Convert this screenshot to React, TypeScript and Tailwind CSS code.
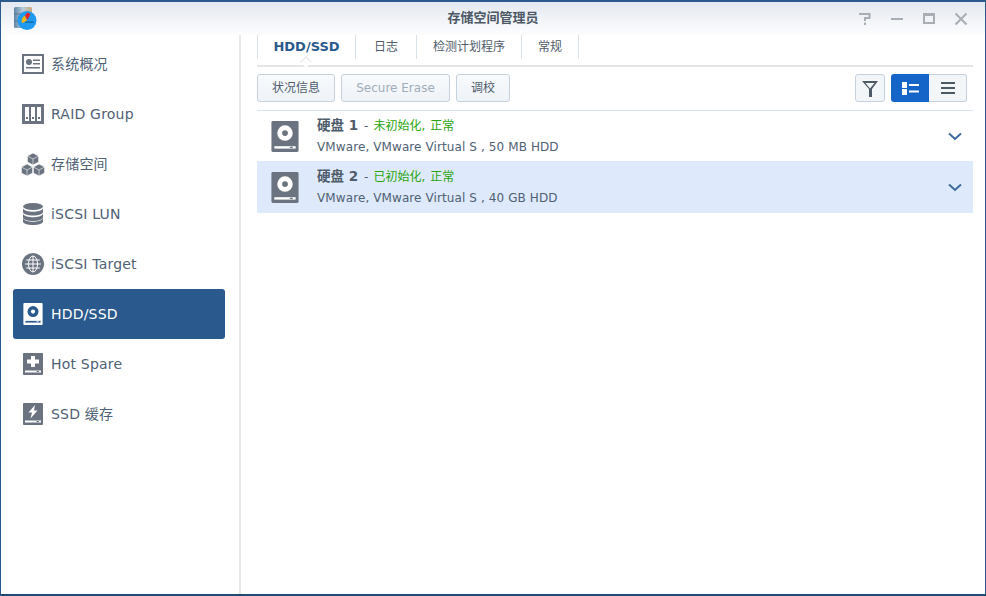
import type { ReactNode } from 'react';

const FONT = "font-['DejaVu_Sans','Noto_Sans_CJK_SC',sans-serif]";

function DiskIcon({ size = 20, fill = '#6a737f', hole = 'white' }: { size?: number; fill?: string; hole?: string }) {
  return (
    <svg width={size} height={Math.round(size * 1.1)} viewBox="0 0 28 32">
      <rect x="0" y="0" width="28" height="32" rx="1.5" fill={fill} />
      <circle cx="14" cy="12.5" r="8" fill={hole} />
      <circle cx="14" cy="12.5" r="3" fill={fill} />
      <rect x="3" y="26" width="22" height="2.5" fill={hole} />
      <rect x="19" y="26.6" width="3" height="1.3" fill={fill} />
    </svg>
  );
}

const iconColor = '#6a737f';

const icons: Record<string, ReactNode> = {
  overview: (
    <svg width="22" height="20" viewBox="0 0 22 20">
      <rect x="0" y="0" width="22" height="20" fill={iconColor} />
      <rect x="2" y="2" width="18" height="16" fill="white" />
      <circle cx="7" cy="8" r="3" fill={iconColor} />
      <rect x="11" y="5.5" width="7" height="1.5" fill={iconColor} />
      <rect x="11" y="9" width="7" height="1.5" fill={iconColor} />
      <rect x="4" y="13" width="14" height="1.5" fill={iconColor} />
    </svg>
  ),
  raid: (
    <svg width="22" height="20" viewBox="0 0 22 20">
      <rect x="0" y="0" width="22" height="20" fill={iconColor} />
      <rect x="3" y="3" width="4" height="14" fill="white" />
      <rect x="9" y="3" width="4" height="14" fill="white" />
      <rect x="15" y="3" width="4" height="14" fill="white" />
      <rect x="4" y="13" width="2" height="2" fill={iconColor} />
      <rect x="10" y="13" width="2" height="2" fill={iconColor} />
      <rect x="16" y="13" width="2" height="2" fill={iconColor} />
    </svg>
  ),
  storage: (
    <svg width="24" height="23" viewBox="0 0 24 23" fill={iconColor} stroke="white" strokeWidth="0.6">
      <path d="M12 0l5.6 3v6L12 12 6.400 9V3z" />
      <path d="M6 11l5.600 3v6L6 23 .4 20v-6z" />
      <path d="M18 11l5.600 3v6L18 23l-5.600-3v-6z" />
      <path d="M6.400 3L12 6l5.600-3M12 6v6M.4 14L6 17l5.600-3M6 17v6M12.400 14l5.600 3 5.600-3M18 17v6" fill="none" />
    </svg>
  ),
  lun: (
    <svg width="20" height="22" viewBox="0 0 20 22" fill={iconColor}>
      <ellipse cx="10" cy="3.500" rx="10" ry="3.500" />
      <path d="M0 5.500c1.500 2.300 5.500 3.200 10 3.200s8.500-.9 10-3.200v3.500c0 2-4.500 3.500-10 3.500S0 11 0 9z" />
      <path d="M0 11c1.500 2.300 5.500 3.200 10 3.200s8.500-.9 10-3.200v3.500c0 2-4.500 3.500-10 3.500S0 16.500 0 14.500z" />
      <path d="M0 15.500c1.500 2.300 5.500 3.200 10 3.200s8.500-.9 10-3.200v3c0 2-4.500 3.500-10 3.500S0 20.500 0 18.500z" />
    </svg>
  ),
  target: (
    <svg width="22" height="22" viewBox="0 0 22 22">
      <circle cx="11" cy="11" r="11" fill={iconColor} />
      <g fill="none" stroke="white" strokeWidth="1">
        <ellipse cx="11" cy="11" rx="4.500" ry="8" />
        <path d="M11 3v16M3 11h16M4.200 7h13.600M4.200 15h13.600" />
      </g>
    </svg>
  ),
  disk: <DiskIcon />,
  diskActive: <DiskIcon fill="white" hole="#2a5a8d" />,
  spare: (
    <svg width="20" height="22" viewBox="0 0 20 22">
      <rect width="20" height="22" rx="1" fill={iconColor} />
      <path d="M8 3h4v3.500h4v4h-4V14H8v-3.500H4v-4h4z" fill="white" />
      <rect x="2" y="17.500" width="16" height="2" fill="white" />
      <rect x="13.500" y="18" width="2.500" height="1" fill={iconColor} />
    </svg>
  ),
  cache: (
    <svg width="20" height="22" viewBox="0 0 20 22">
      <rect width="20" height="22" rx="1" fill={iconColor} />
      <path d="M12 2L5.500 9.500h3.500L7.500 15.500 14.500 7.500H11z" fill="white" />
      <rect x="2" y="17.500" width="16" height="2" fill="white" />
      <rect x="13.500" y="18" width="2.500" height="1" fill={iconColor} />
    </svg>
  ),
};

const navItems = [
  { key: 'overview', label: '系统概况' },
  { key: 'raid', label: 'RAID Group' },
  { key: 'storage', label: '存储空间' },
  { key: 'lun', label: 'iSCSI LUN' },
  { key: 'target', label: 'iSCSI Target' },
  { key: 'disk', label: 'HDD/SSD', active: true },
  { key: 'spare', label: 'Hot Spare' },
  { key: 'cache', label: 'SSD 缓存' },
];

const tabs = ['HDD/SSD', '日志', '检测计划程序', '常规'];

const disks = [
  { name: '硬盘 1', status: '未初始化,', ok: '正常', info: 'VMware, VMware Virtual S , 50 MB HDD' },
  { name: '硬盘 2', status: '已初始化,', ok: '正常', info: 'VMware, VMware Virtual S , 40 GB HDD', selected: true },
];

function AppIcon() {
  return (
    <svg width="24" height="24" viewBox="0 0 24 24" className="shrink-0">
      <defs>
        <linearGradient id="can" x1="0" x2="1" y1="0" y2="0">
          <stop offset="0" stopColor="#5d86a8" />
          <stop offset="0.5" stopColor="#b9cbd8" />
          <stop offset="1" stopColor="#c8a878" />
        </linearGradient>
      </defs>
      <rect x="0" y="0" width="18" height="21" rx="1.500" fill="url(#can)" />
      <path d="M0 7h18M0 14h18" stroke="#5a6b78" strokeWidth="0.8" />
      <circle cx="13" cy="13.500" r="9.500" fill="#1e9bf0" />
      <path d="M8 16a6 6 0 0 1 3-7.500l2 5.500z" fill="#f5b80f" />
      <path d="M11 8.500l2.500-3 3 1.500-3 6z" fill="#e8202a" />
      <rect x="11" y="14.500" width="9" height="1.200" fill="#0d5fa8" />
    </svg>
  );
}

function WindowButton({ children }: { children: ReactNode }) {
  return <div className="flex h-5 w-8 items-center justify-center">{children}</div>;
}

function ToolButton({ children, disabled, width }: { children: ReactNode; disabled?: boolean; width: string }) {
  return (
    <button className={`h-7 rounded-[3px] border border-[#c5d1dd] bg-gradient-to-b from-[#f8fafc] to-[#eef3f8] text-[12px] ${width} ${disabled ? 'text-[#9fadba]' : 'text-[#4f5c6b]'}`}>
      {children}
    </button>
  );
}

export default function App() {
  return (
    <div className={`flex h-[596px] w-[986px] flex-col overflow-hidden border-x border-b-2 border-t-2 border-x-[#2a5a8d] border-b-[#1f4a78] border-t-[#2a5a8d] bg-white ${FONT}`}>
      {/* Title bar */}
      <header className="relative flex h-[33px] shrink-0 items-center bg-gradient-to-b from-[#e4e9f0] to-[#fdfdfe] pl-[13px] pr-2">
        <AppIcon />
        <div className="absolute inset-x-0 top-[8px] text-center text-[13px] font-bold leading-4 text-[#4c5866]">存储空间管理员</div>
        <div className="ml-auto flex items-center">
          <WindowButton>
            <svg width="14" height="13" viewBox="0 0 14 13" fill="none" stroke="#a9aeb4" strokeWidth="2">
              <path d="M1 2h10.500v4H7v3" />
              <path d="M7 10.500v2.500" />
            </svg>
          </WindowButton>
          <WindowButton><span className="h-[2px] w-3 bg-[#a9aeb4]" /></WindowButton>
          <WindowButton><span className="h-[11px] w-3 border-2 border-t-[3px] border-[#a9aeb4]" /></WindowButton>
          <WindowButton>
            <svg width="14" height="14" viewBox="0 0 14 14"><path d="M1.500 1.500l11 11M12.500 1.500l-11 11" stroke="#a9aeb4" strokeWidth="2" /></svg>
          </WindowButton>
        </div>
      </header>

      <div className="flex min-h-0 flex-1">
        {/* Sidebar */}
        <nav className="flex w-[240px] shrink-0 flex-col border-r-2 border-[#e6e8ea] pl-3 pr-[14px] pt-[4px]">
          {navItems.map((item) => (
            <div
              key={item.key}
              className={`flex h-[50px] items-center rounded-[3px] text-[14px] tracking-[0.2px] ${item.active ? 'bg-[#2a5a8d] text-white' : 'text-[#4f6175]'}`}
            >
              <span className="flex w-[38px] justify-end pr-[6px]">
                <span className="flex w-[24px] justify-center">
                  {item.active ? icons.diskActive : icons[item.key]}
                </span>
              </span>
              <span>{item.label}</span>
            </div>
          ))}
        </nav>

        {/* Content */}
        <main className="flex min-w-0 flex-1 flex-col pl-4 pr-3">
          <div className="relative flex h-8 shrink-0 items-start border-b-2 border-[#e3e5e8]">
            {tabs.map((tab, i) => (
              <div
                key={tab}
                className={`flex h-[24px] items-center border-r border-[#d9e1e9] ${i === 0 ? 'w-[99px] justify-center border-l text-[13px] font-bold text-[#2a5a8d]' : 'text-[12px] text-[#4f5c6b]'} ${i === 1 ? 'w-[61px] justify-center' : ''} ${i === 2 ? 'w-[105px] justify-center' : ''} ${i === 3 ? 'w-[57px] justify-center' : ''}`}
              >
                {tab}
              </div>
            ))}
            <span className="absolute bottom-[-2px] left-[45px] h-[8px] w-[8px] translate-y-[-1px] rotate-45 border-l border-t border-[#e3e5e8] bg-white" />
          </div>

          <div className="flex h-[44px] shrink-0 items-center border-b border-[#d9e4ee] pb-[1px]">
            <div className="flex gap-[6px]">
              <ToolButton width="w-[78px]">状况信息</ToolButton>
              <ToolButton width="w-[109px]" disabled>Secure Erase</ToolButton>
              <ToolButton width="w-[54px]">调校</ToolButton>
            </div>
            <div className="ml-auto mr-[6px] flex">
              <button className="mr-[6px] flex h-7 w-[30px] items-center justify-center rounded-[3px] border border-[#c5d1dd] bg-[#f3f6f9]">
                <svg width="16" height="17" viewBox="0 0 16 17"><path d="M0 1h16L10 9v8H7V9zM3.500 3l4.500 5.500L12.500 3z" fill="#4f5966" fillRule="evenodd" /></svg>
              </button>
              <button className="flex h-7 w-[38px] items-center justify-center rounded-l-[3px] bg-[#1565c8]">
                <svg width="17" height="13" viewBox="0 0 17 13" fill="white">
                  <rect x="0" y="0" width="5" height="6" />
                  <rect x="0" y="7" width="5" height="6" />
                  <rect x="7" y="2" width="10" height="2" />
                  <rect x="7" y="8.500" width="10" height="2" />
                </svg>
              </button>
              <button className="flex h-7 w-[38px] items-center justify-center rounded-r-[3px] border border-l-0 border-[#c5d1dd] bg-[#f3f6f9]">
                <svg width="14" height="12" viewBox="0 0 14 12" fill="#4f5966">
                  <rect y="0" width="14" height="2" />
                  <rect y="5" width="14" height="2" />
                  <rect y="10" width="14" height="2" />
                </svg>
              </button>
            </div>
          </div>

          {disks.map((d) => (
            <div key={d.name} className={`flex shrink-0 items-center ${d.selected ? 'h-[52px] bg-[#deeafb]' : 'h-[50px]'}`}>
              <span className="ml-[14px] mr-[18px] flex">
                <DiskIcon size={28} />
              </span>
              <div className="flex min-w-0 flex-1 flex-col gap-1">
                <div className="-mt-[1px] flex items-baseline text-[12px] leading-[18px]">
                  <span className="text-[13.5px] font-bold text-[#4f5c6b]">{d.name}</span>
                  <span className="ml-[6px] text-[#4f5c6b]">-</span>
                  <span className="ml-[5px] text-[#2aa50f]">{d.status}</span>
                  <span className="ml-[5px] text-[#2aa50f]">{d.ok}</span>
                </div>
                <div className="text-[12px] leading-[17px] tracking-[0.1px] text-[#4f6175]">{d.info}</div>
              </div>
              <svg width="14" height="9" viewBox="0 0 14 9" className="mr-[11px]">
                <path d="M1 1.500l6 5.500 6-5.500" fill="none" stroke="#3d6a9c" strokeWidth="2" />
              </svg>
            </div>
          ))}
        </main>
      </div>
    </div>
  );
}
